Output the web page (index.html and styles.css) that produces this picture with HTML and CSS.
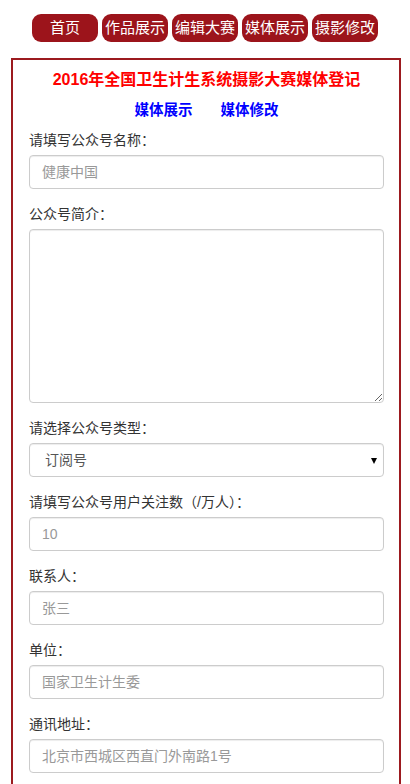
FILE: index.html
```html
<!DOCTYPE html>
<html lang="zh-CN">
<head>
<meta charset="utf-8">
<title>2016年全国卫生计生系统摄影大赛媒体登记</title>
<link rel="stylesheet" href="styles.css">
</head>
<body>
<nav class="nav">
  <a class="nav-btn" href="#">首页</a>
  <a class="nav-btn" href="#">作品展示</a>
  <a class="nav-btn" href="#">编辑大赛</a>
  <a class="nav-btn" href="#">媒体展示</a>
  <a class="nav-btn" href="#">摄影修改</a>
</nav>
<main class="panel">
  <h1 class="title">2016年全国卫生计生系统摄影大赛媒体登记</h1>
  <div class="links">
    <a class="link" href="#">媒体展示</a>
    <a class="link" href="#">媒体修改</a>
  </div>
  <form class="form">
    <div class="group">
      <label class="label">请填写公众号名称：</label>
      <input class="control" type="text" placeholder="健康中国">
    </div>
    <div class="group">
      <label class="label">公众号简介：</label>
      <textarea class="control area"></textarea>
    </div>
    <div class="group">
      <label class="label">请选择公众号类型：</label>
      <div class="select-wrap">
        <select class="control select">
          <option>订阅号</option>
          <option>服务号</option>
        </select>
        <span class="caret"></span>
      </div>
    </div>
    <div class="group">
      <label class="label">请填写公众号用户关注数（/万人）：</label>
      <input class="control" type="text" placeholder="10">
    </div>
    <div class="group">
      <label class="label">联系人：</label>
      <input class="control" type="text" placeholder="张三">
    </div>
    <div class="group">
      <label class="label">单位：</label>
      <input class="control" type="text" placeholder="国家卫生计生委">
    </div>
    <div class="group">
      <label class="label">通讯地址：</label>
      <input class="control" type="text" placeholder="北京市西城区西直门外南路1号">
    </div>
  </form>
</main>
</body>
</html>
```
FILE: styles.css
```css
* { box-sizing: border-box; }
html, body { margin: 0; padding: 0; background: #fff; }
body {
  font-family: "Liberation Sans", "Noto Sans CJK SC", sans-serif;
  font-size: 14px;
  line-height: 20px;
  color: #333;
}
.nav {
  display: flex;
  justify-content: center;
  gap: 4px;
  padding-top: 14px;
}
.nav-btn {
  display: block;
  width: 66px;
  height: 28px;
  line-height: 28px;
  border-radius: 9px;
  background: #9c141b;
  color: #fff;
  font-size: 15px;
  text-align: center;
  text-decoration: none;
  white-space: nowrap;
}
.panel {
  margin: 16px 0 0 11px;
  width: 390px;
  border: 2px solid #9c1a1f;
  padding: 10px 15px 20px 16px;
}
.title {
  margin: 0 0 10px;
  font-size: 16px;
  line-height: 20px;
  font-weight: bold;
  color: #f00;
  text-align: center;
  white-space: nowrap;
}
.links {
  display: flex;
  justify-content: center;
  gap: 28px;
  margin-bottom: 10px;
}
.link {
  font-size: 14.5px;
  line-height: 20px;
  font-weight: bold;
  color: #00f;
  text-decoration: none;
}
.group { margin-bottom: 15px; }
.label {
  display: block;
  margin-bottom: 5px;
  font-weight: normal;
  color: #333;
}
.control {
  display: block;
  width: 100%;
  height: 34px;
  padding: 6px 12px;
  font-family: inherit;
  font-size: 14px;
  line-height: 20px;
  color: #555;
  background: #fff;
  border: 1px solid #ccc;
  border-radius: 4px;
  box-shadow: inset 0 1px 1px rgba(0,0,0,.075);
  outline: none;
}
.control::placeholder { color: #999; }
.area { height: 174px; resize: vertical; }
.select-wrap { position: relative; }
.select {
  -webkit-appearance: none;
  appearance: none;
  padding-left: 15px;
}
.caret {
  position: absolute;
  right: 7px;
  top: 15px;
  width: 0;
  height: 0;
  border-left: 3.5px solid transparent;
  border-right: 3.5px solid transparent;
  border-top: 6px solid #000;
  pointer-events: none;
}
```
